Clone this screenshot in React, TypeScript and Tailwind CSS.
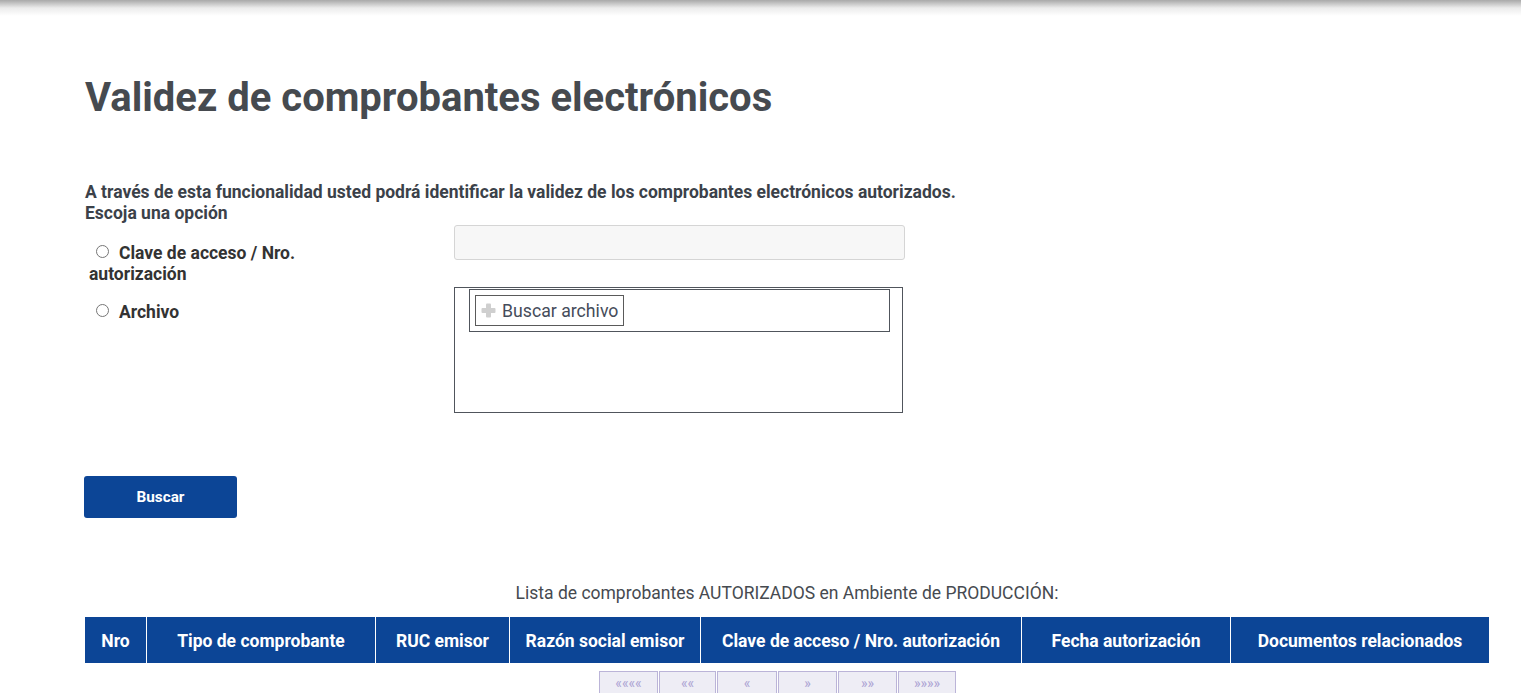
import React from 'react';

const columns = [
  { label: 'Nro', w: 'w-[61px]' },
  { label: 'Tipo de comprobante', w: 'w-[229px]' },
  { label: 'RUC emisor', w: 'w-[134px]' },
  { label: 'Razón social emisor', w: 'w-[191px]' },
  { label: 'Clave de acceso / Nro. autorización', w: 'w-[321px]' },
  { label: 'Fecha autorización', w: 'w-[209px]' },
  { label: 'Documentos relacionados', w: 'w-[259px]' },
];

const pages = [
  { t: '««««', w: 'w-[59px]' },
  { t: '««', w: 'w-[57px]' },
  { t: '«', w: 'w-[60px]' },
  { t: '»', w: 'w-[59px]' },
  { t: '»»', w: 'w-[59px]' },
  { t: '»»»»', w: 'w-[58px]' },
];

const Radio = () => (
  <span className="inline-block w-[13px] h-[13px] rounded-full border border-[#767676] bg-white align-[1px] mr-[10px] ml-[7px]" />
);

const App = () => {
  return (
    <div className="min-h-[693px] bg-white font-['Roboto',sans-serif] overflow-hidden">
      <div className="h-[16px] bg-gradient-to-b from-[#a9a9a9] via-[#ececec] to-white" />

      <div className="pl-[85px] pr-[32px]">
        <h1 className="mt-[58px] text-[40px] leading-[48px] font-bold text-[#464a4f]">
          Validez de comprobantes electrónicos
        </h1>

        <div className="mt-[60px] text-[17.5px] leading-[21px] font-bold text-[#3b4149]">
          <p>A través de esta funcionalidad usted podrá identificar la validez de los comprobantes electrónicos autorizados.</p>
          <p>Escoja una opción</p>
        </div>

        <div className="mt-[1px] flex">
          <div className="w-[369px] pt-[18px] pl-[4px]">
            <label className="block w-[235px] text-[17.5px] leading-[21px] font-bold text-[#333]">
              <Radio />
              Clave de acceso / Nro. autorización
            </label>
          </div>
          <input
            type="text"
            className="w-[451px] h-[35px] bg-[#f7f7f7] border border-[#d5d5d5] rounded-[3px] outline-none"
          />
        </div>

        <div className="mt-[2px] flex">
          <div className="w-[369px] pt-[15px] pl-[4px]">
            <label className="block text-[17.5px] leading-[21px] font-bold text-[#333]">
              <Radio />
              Archivo
            </label>
          </div>
          <div className="w-[449px] h-[126px] border border-[#50555c] px-[14px] pt-[1px]">
            <div className="h-[43px] w-[421px] border border-[#50555c] pl-[5px] pt-[5px]">
              <button className="flex items-center h-[31px] w-[149px] border border-[#5a5a5a] pl-[5px] pt-[2px] text-[17.7px] text-[#454c5a] bg-white">
                <svg width="15" height="15" viewBox="0 0 15 15" className="mr-[6px] -mt-[3px]">
                  <rect x="5" y="0.5" width="5" height="14" rx="1" fill="#cfcfcf" />
                  <rect x="0.5" y="5" width="14" height="5" rx="1" fill="#cfcfcf" />
                </svg>
                Buscar archivo
              </button>
            </div>
          </div>
        </div>

        <button className="mt-[63px] -ml-[1px] w-[153px] h-[42px] rounded-[3px] bg-[#0c4596] text-white text-[15.3px] font-bold">
          Buscar
        </button>

        <p className="mt-[63px] w-[1404px] text-center text-[17.5px] leading-[24px] text-[#464a50]">
          Lista de comprobantes AUTORIZADOS en Ambiente de PRODUCCIÓN:
        </p>

        <div className="mt-[12px] flex w-[1404px] h-[46px] bg-[#0c4596]">
          {columns.map((c, i) => (
            <div
              key={c.label}
              className={`${c.w} flex items-center justify-center pt-[2px] text-white text-[17.5px] font-bold ${i > 0 ? 'border-l border-white' : ''}`}
            >
              {c.label}
            </div>
          ))}
        </div>

        <div className="mt-[8px] ml-[514px] flex gap-[1px]">
          {pages.map((p) => (
            <div
              key={p.t}
              className={`${p.w} h-[28px] flex items-center justify-center bg-[#eeedf5] border border-[#bbb4d8] text-[#aca3d3] text-[14px] leading-none pb-[4px]`}
            >
              {p.t}
            </div>
          ))}
        </div>
      </div>
    </div>
  );
};

export default App;
